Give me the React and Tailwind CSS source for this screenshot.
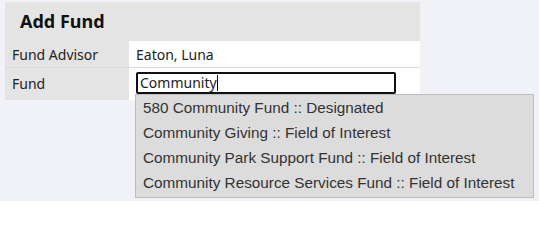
import React from "react";

const funds = [
  "580 Community Fund :: Designated",
  "Community Giving :: Field of Interest",
  "Community Park Support Fund :: Field of Interest",
  "Community Resource Services Fund :: Field of Interest",
];

export default function App() {
  return (
    <div className="w-[539px] h-[201px] bg-[#f1f2f7] pt-[2px] pl-[5px] font-['Noto_Sans',sans-serif] text-[#222]">
      <div className="w-[415px]">
        {/*header*/}
        <div className="h-[39px] bg-[#e4e4e4] flex items-center pl-[15px]">
          <h3 className="text-[18px] font-bold text-[#111]">Add Fund</h3>
        </div>
        {/*rows*/}
        <div className="grid grid-cols-[124px_1fr]">
          <div className="bg-[#e4e4e4] h-[27px] flex items-center pl-[7px] text-[14px] border-b border-[#dadada]">
            Fund Advisor
          </div>
          <div className="bg-white h-[27px] flex items-center pl-[7px] text-[14px] border-b border-[#dadada]">
            Eaton, Luna
          </div>
          <div className="bg-[#e4e4e4] h-[32px] flex items-center pl-[7px] text-[14px] pb-[2px]">
            Fund
          </div>
          <div className="bg-white h-[32px] relative pl-[7px] pt-[4px]">
            <div className="w-[260px] h-[22px] border-2 border-[#111] rounded-[2px] flex items-center pl-[2px] text-[14px] leading-none">
              <span>Community</span>
              <span className="w-px h-[16px] bg-black"></span>
            </div>
            {/*suggestions*/}
            <ul className="absolute left-[6px] top-[26px] w-[399px] bg-[#dcdcdc] border border-[#bdbdbd] py-[1px] font-['Liberation_Sans',Arial,sans-serif] text-[15.3px] text-[#333]">
              {funds.map((f) => (
                <li key={f} className="h-[25px] flex items-center pl-[7px]">
                  {f}
                </li>
              ))}
            </ul>
          </div>
        </div>
      </div>
    </div>
  );
}
